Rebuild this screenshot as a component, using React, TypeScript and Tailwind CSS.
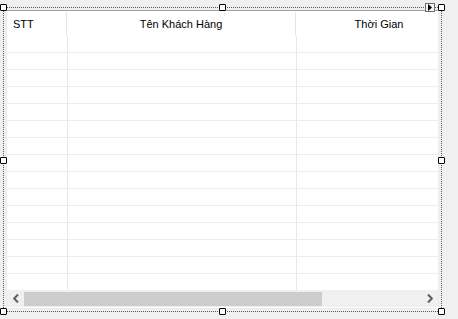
import React from "react";

const rows = Array.from({ length: 15 });

export default function App() {
	return (
		<div className="relative w-[458px] h-[319px] bg-[#f0f0f0] pl-[3px] pt-[7px] overflow-hidden font-['Liberation_Sans',Arial,sans-serif] text-[11px] text-black">
			<div className="w-[439px] h-[305px] border border-dotted border-[#5a5a5a] p-[2px]">
				<DataGrid />
			</div>

			{/* selection handles */}
			<Handle className="left-0 top-[4px]" />
			<Handle className="left-[219px] top-[4px]" />
			<Handle className="left-[438px] top-[4px]" />
			<Handle className="left-0 top-[157px]" />
			<Handle className="left-[438px] top-[157px]" />
			<Handle className="left-0 top-[308px]" />
			<Handle className="left-[219px] top-[308px]" />
			<Handle className="left-[438px] top-[308px]" />

			{/* smart tag */}
			<div className="absolute left-[425px] top-[3px] w-[10px] h-[9px] border border-[#707070] bg-[#f4f4f4] flex items-center justify-center">
				<svg width="4" height="7" viewBox="0 0 4 7">
					<path d="M0 0 L4 3.5 L0 7 Z" fill="#000" />
				</svg>
			</div>
		</div>
	);
}

function Handle({ className }: { className: string }) {
	return (
		<div
			className={`absolute w-[7px] h-[7px] bg-white border border-black rounded-[1px] ${className}`}
		/>
	);
}

function DataGrid() {
	return (
		<div className="w-[433px] h-[299px] bg-white border-t border-t-[#a0a0a0] border-x border-x-[#ececec] border-b border-b-[#ececec] flex flex-col overflow-hidden">
			{/* header */}
			<div className="flex h-[25px] shrink-0 overflow-hidden">
				<div className="w-[60px] shrink-0 mt-[1px] border-r border-[#e5e5e5] flex items-center pl-[6px]">
					STT
				</div>
				<div className="w-[229px] shrink-0 mt-[1px] border-r border-[#e5e5e5] flex items-center justify-center">
					Tên Khách Hàng
				</div>
				<div className="w-[166px] shrink-0 mt-[1px] flex items-center justify-center">
					Thời Gian
				</div>
			</div>

			{/* body */}
			<div className="flex-1 overflow-hidden">
				{rows.map((_, i) => (
					<div key={i} className="flex h-[17px] border-b border-[#ededed]">
						<div className="w-[61px] shrink-0 border-r border-[#e8e8e8]" />
						<div className="w-[229px] shrink-0 border-r border-[#e8e8e8]" />
						<div className="flex-1" />
					</div>
				))}
			</div>

			{/* horizontal scrollbar */}
			<div className="flex h-[17px] shrink-0 bg-[#f0f0f0] items-center mb-[1px]">
				<div className="w-[17px] h-full flex items-center justify-center">
					<svg width="6" height="9" viewBox="0 0 6 9">
						<path d="M5 0.5 L1.2 4.5 L5 8.5" fill="none" stroke="#606060" strokeWidth="2" />
					</svg>
				</div>
				<div className="w-[298px] h-[14px] bg-[#cdcdcd]" />
				<div className="flex-1" />
				<div className="w-[17px] h-full flex items-center justify-center">
					<svg width="6" height="9" viewBox="0 0 6 9">
						<path d="M1 0.5 L4.8 4.5 L1 8.5" fill="none" stroke="#606060" strokeWidth="2" />
					</svg>
				</div>
			</div>
		</div>
	);
}
